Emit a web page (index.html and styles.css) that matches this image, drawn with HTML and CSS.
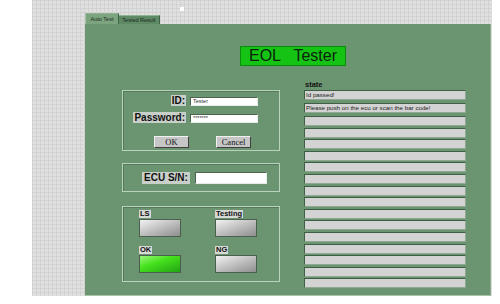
FILE: index.html
```html
<!DOCTYPE html>
<html lang="en">
<head>
    <meta charset="UTF-8">
    <title>EOL Tester</title>
    <link rel="stylesheet" href="styles.css">
</head>
<body>
    <div class="desk">
        <span class="dot"></span>
        <div class="tabs">
            <div class="tab active">Auto Test</div>
            <div class="tab">Tested Result</div>
        </div>

        <div class="panel">
            <div class="title">EOL   Tester</div>

            <div class="columns">
                <div class="left">
                    <!-- login -->
                    <div class="box login">
                        <div class="field">
                            <span class="label">ID:</span>
                            <div class="input">Tester</div>
                        </div>
                        <div class="field">
                            <span class="label">Password:</span>
                            <div class="input">*******</div>
                        </div>
                        <div class="buttons">
                            <div class="btn">OK</div>
                            <div class="btn">Cancel</div>
                        </div>
                    </div>

                    <!-- serial number -->
                    <div class="box ecu">
                        <span class="label">ECU S/N:</span>
                        <div class="input wide"></div>
                    </div>

                    <!-- indicators -->
                    <div class="box lamps">
                        <div class="lamp">
                            <span class="tag">LS</span>
                            <div class="led"></div>
                        </div>
                        <div class="lamp">
                            <span class="tag">Testing</span>
                            <div class="led"></div>
                        </div>
                        <div class="lamp">
                            <span class="tag">OK</span>
                            <div class="led on"></div>
                        </div>
                        <div class="lamp">
                            <span class="tag">NG</span>
                            <div class="led"></div>
                        </div>
                    </div>
                </div>

                <div class="right">
                    <div class="state-label">state</div>
                    <div class="rows">
                        <div class="row first">Id passed!</div>
                        <div class="row first">Please push on the ecu or scan the bar code!</div>
                        <div class="row"></div>
                        <div class="row"></div>
                        <div class="row"></div>
                        <div class="row"></div>
                        <div class="row"></div>
                        <div class="row"></div>
                        <div class="row"></div>
                        <div class="row"></div>
                        <div class="row"></div>
                        <div class="row"></div>
                        <div class="row"></div>
                        <div class="row"></div>
                        <div class="row"></div>
                        <div class="row"></div>
                        <div class="row"></div>
                    </div>
                </div>
            </div>
        </div>
    </div>
</body>
</html>
```

FILE: styles.css
```css
:root {
    --panel: #6b9571;
    --panel-light: #b9d2bc;
    --panel-dark: #3d5f43;
    --gray: #d3d3d3;
}

body {
    margin: 0;
    background: white;
    font-family: 'Liberation Sans', Arial, sans-serif;
    color: #111;
}

.desk {
    position: relative;
    box-sizing: border-box;
    width: 460px;
    height: 296px;
    margin-left: 32px;
    padding: 13px 0 0 53px;
    background-color: #e0e0e0;
    background-image:
        linear-gradient(#d2d2d2 1px, transparent 1px),
        linear-gradient(90deg, #d2d2d2 1px, transparent 1px);
    background-size: 4px 4px;
}

.dot {
    position: absolute;
    left: 148px;
    top: 7px;
    width: 4px;
    height: 4px;
    background: white;
}

.tabs {
    display: flex;
    align-items: flex-end;
    height: 11px;
}

.tab {
    box-sizing: border-box;
    width: 41px;
    height: 9px;
    background: #5f8a66;
    border-top: 1px solid #8fb393;
    border-right: 1px solid #3f6145;
    font-size: 5.5px;
    line-height: 8px;
    text-align: center;
    color: #1d2a1d;
}

.tab.active {
    width: 34px;
    height: 11px;
    background: #7ba47f;
    border-left: 1px solid #a5c4a8;
    line-height: 10px;
}

.panel {
    box-sizing: border-box;
    width: 406px;
    height: 272px;
    padding: 22px 0 0 37px;
    background: var(--panel);
    border-right: 1px solid #8aae8e;
    border-bottom: 1px solid #a8c4ab;
}

.title {
    box-sizing: border-box;
    width: 106px;
    height: 20px;
    margin-left: 118px;
    background: #15c315;
    border: 1px solid #0d8d0d;
    font-size: 16px;
    line-height: 18px;
    text-align: center;
    white-space: pre;
    color: #0b240b;
}

.columns {
    display: flex;
    gap: 24px;
    margin-top: 14px;
}

.left {
    width: 158px;
    margin-top: 10px;
}

.box {
    box-sizing: border-box;
    border: 1px solid var(--panel-light);
    box-shadow: inset 1px 1px 0 #55795b;
}

.label {
    background: #c9cfc9;
    font-weight: bold;
    font-size: 10px;
    line-height: 11px;
    padding: 0 1px;
    color: #111;
}

.input {
    box-sizing: border-box;
    height: 9px;
    background: white;
    border: 1px solid #7f8f80;
    border-color: #4d634f #e6ece6 #e6ece6 #4d634f;
    font-size: 5.5px;
    line-height: 7px;
    padding-left: 2px;
    color: #333;
}

/* login */
.login {
    height: 61px;
    padding-top: 4px;
}

.field {
    display: grid;
    grid-template-columns: 63px 68px;
    column-gap: 4px;
    align-items: center;
    height: 11px;
    margin-bottom: 6px;
}

.field .label {
    justify-self: end;
}

.field .input {
    margin-top: 1px;
}

.buttons {
    display: flex;
    gap: 27px;
    margin-top: 13px;
    padding-left: 31px;
}

.btn {
    box-sizing: border-box;
    width: 35px;
    height: 12px;
    background: #c6c6c6;
    border: 1px solid;
    border-color: #f0f0f0 #404040 #404040 #f0f0f0;
    font-family: 'Liberation Serif', 'Times New Roman', serif;
    font-size: 8.5px;
    line-height: 10px;
    text-align: center;
    color: #111;
}

/* ecu */
.ecu {
    display: flex;
    align-items: center;
    height: 29px;
    margin-top: 12px;
    padding-left: 19px;
}

.ecu .label {
    line-height: 12px;
    padding: 0 2px;
}

.input.wide {
    width: 72px;
    height: 12px;
    margin-left: 5px;
}

/* indicators */
.lamps {
    display: grid;
    grid-template-columns: 42px 42px;
    align-content: start;
    column-gap: 34px;
    row-gap: 9px;
    height: 76px;
    margin-top: 14px;
    padding: 3px 0 0 16px;
}

.lamp {
    display: flex;
    flex-direction: column;
    align-items: flex-start;
}

.tag {
    background: #d6d9d6;
    font-weight: bold;
    font-size: 7.5px;
    line-height: 8px;
    padding: 0 1px;
}

.led {
    box-sizing: border-box;
    width: 42px;
    height: 18px;
    margin-top: 1px;
    border: 1px solid #4a5f4c;
    background: linear-gradient(160deg, #f2f2f2 0%, #c4c4c4 45%, #8e8e8e 100%);
}

.led.on {
    background: linear-gradient(160deg, #9cf77c 0%, #46e21d 40%, #22a412 100%);
}

/* state list */
.right {
    width: 162px;
}

.state-label {
    font-weight: bold;
    font-size: 7.5px;
    line-height: 9px;
    padding-left: 1px;
    color: #111;
}

.rows {
    display: flex;
    flex-direction: column;
    gap: 1.6px;
    margin-top: 1px;
}

.row {
    box-sizing: border-box;
    height: 10px;
    background: var(--gray);
    border: 1px solid #8fa892;
    border-color: var(--panel-dark) #8fa892 #8fa892 var(--panel-dark);
    font-size: 6.2px;
    line-height: 8px;
    padding-left: 1px;
    white-space: nowrap;
    color: #222;
}

.row.first {
    margin-bottom: 1.4px;
}
```
